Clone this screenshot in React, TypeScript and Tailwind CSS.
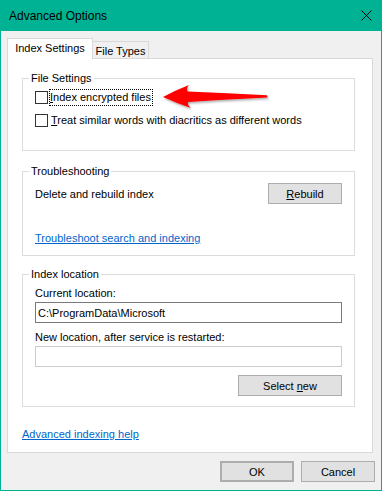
import React from "react";

function Checkbox() {
  return <span className="block w-[13px] h-[13px] border border-[#333333] bg-white shrink-0" />;
}

function WinButton({ children, className = "" }: { children: React.ReactNode; className?: string }) {
  return (
    <div
      className={
        "h-[21px] w-[74px] bg-[#e1e1e1] border border-[#adadad] flex items-center justify-center leading-[16px] " +
        className
      }
    >
      {children}
    </div>
  );
}

function Group({
  title,
  children,
  className = "",
}: {
  title: string;
  children: React.ReactNode;
  className?: string;
}) {
  return (
    <fieldset className={"w-[333px] border border-[#dcdcdc] p-0 m-0 " + className}>
      <legend className="ml-[6px] px-[2px] leading-[16px]">{title}</legend>
      {children}
    </fieldset>
  );
}

export default function App() {
  return (
    <div className="w-[382px] h-[491px] bg-[#00b294] flex flex-col text-[11px] text-black font-['Liberation_Sans',Arial,sans-serif] relative overflow-hidden">
      {/* Title bar */}
      <div className="h-[31px] shrink-0 flex items-center justify-between pl-[9px] pr-[10px]">
        <span className="text-[12px] leading-[16px]">Advanced Options</span>
        <svg width="11" height="11" viewBox="0 0 11 11" className="mt-[-1px]">
          <path d="M0.5 0.5 L10.5 10.5 M10.5 0.5 L0.5 10.5" stroke="#000" strokeWidth="1" />
        </svg>
      </div>

      {/* Body */}
      <div className="flex-1 mx-[1px] mb-[1px] bg-[#f0f0f0] flex flex-col pt-[7px] px-[6px]">
        {/* Tabs */}
        <div className="flex items-end h-[20px]">
          <div className="relative z-10 w-[86px] h-[21px] mb-[-1px] bg-white border-l border-t border-r border-[#d9d9d9] flex items-start justify-center pt-[1px] leading-[16px]">
            Index Settings
          </div>
          <div className="w-[56px] h-[17px] bg-[#f0f0f0] border-t border-r border-[#d9d9d9] flex items-start justify-center pt-[1px] leading-[16px]">
            File Types
          </div>
        </div>

        {/* Panel */}
        <div className="w-[366px] h-[395px] bg-white border border-[#d9d9d9] flex flex-col pt-[11px] pl-[14px]">
          <Group title="File Settings">
            <div className="flex flex-col gap-[1px] px-[12px] pb-[19px]">
              <div className="h-[22px] flex items-center">
                <Checkbox />
                <span className="ml-[1px] h-[17px] border border-dotted border-black leading-[15px] pr-[1px]">
                  <span className="underline underline-offset-[1px]">I</span>ndex encrypted files
                </span>
              </div>
              <div className="h-[22px] flex items-center">
                <Checkbox />
                <span className="ml-[1px] h-[17px] border border-transparent leading-[15px] pl-[1px]">
                  <span className="underline underline-offset-[1px]">T</span>reat similar words with diacritics as different words
                </span>
              </div>
            </div>
          </Group>

          <Group title="Troubleshooting" className="mt-[12px]">
            <div className="flex flex-col px-[12px] pt-[4px] pb-[9px]">
              <div className="flex items-center justify-between h-[21px]">
                <span className="leading-[16px] mt-[1px]">Delete and rebuild index</span>
                <WinButton>
                  <span className="underline underline-offset-[1px]">R</span>ebuild
                </WinButton>
              </div>
              <span className="mt-[26px] leading-[16px] text-[#0066cc] underline underline-offset-[1px] self-start">
                Troubleshoot search and indexing
              </span>
            </div>
          </Group>

          <Group title="Index location" className="mt-[10px]">
            <div className="flex flex-col px-[12px] pt-[3px] pb-[10px]">
              <span className="leading-[16px]">Current location:</span>
              <div className="mt-[1px] h-[21px] border border-[#7a7a7a] bg-white flex items-center pl-[2px] leading-[16px]">
                C:\ProgramData\Microsoft
              </div>
              <span className="mt-[6px] leading-[16px]">New location, after service is restarted:</span>
              <div className="mt-[1px] h-[21px] border border-[#cccccc] bg-white" />
              <div className="mt-[8px] flex justify-end">
                <WinButton className="w-[104px]">
                  Select&nbsp;<span className="underline underline-offset-[1px]">n</span>ew
                </WinButton>
              </div>
            </div>
          </Group>

          <span className="mt-[19px] leading-[16px] text-[#0066cc] underline underline-offset-[1px] self-start">
            Advanced indexing help
          </span>
        </div>

        {/* Buttons */}
        <div className="mt-[8px] flex justify-end gap-[7px]">
          <WinButton className="border-2 border-[#0078d7]">OK</WinButton>
          <WinButton>Cancel</WinButton>
        </div>
      </div>

      {/* Red annotation arrow */}
      <svg
        className="absolute left-0 top-0 pointer-events-none"
        width="382"
        height="491"
        viewBox="0 0 382 491"
      >
        <defs>
          <filter id="sh" x="-20%" y="-50%" width="140%" height="200%">
            <feDropShadow dx="1" dy="1.5" stdDeviation="1.2" floodColor="#000" floodOpacity="0.35" />
          </filter>
        </defs>
        <path
          d="M163 97 Q176 90 189 85 Q186 88 187.5 91.5 Q227 93 267 95.3 L267.5 97.6 Q228 99.5 188 102 Q187 105 191 108 Q176 103 163 97 Z"
          fill="#ff0000"
          filter="url(#sh)"
        />
      </svg>
    </div>
  );
}
